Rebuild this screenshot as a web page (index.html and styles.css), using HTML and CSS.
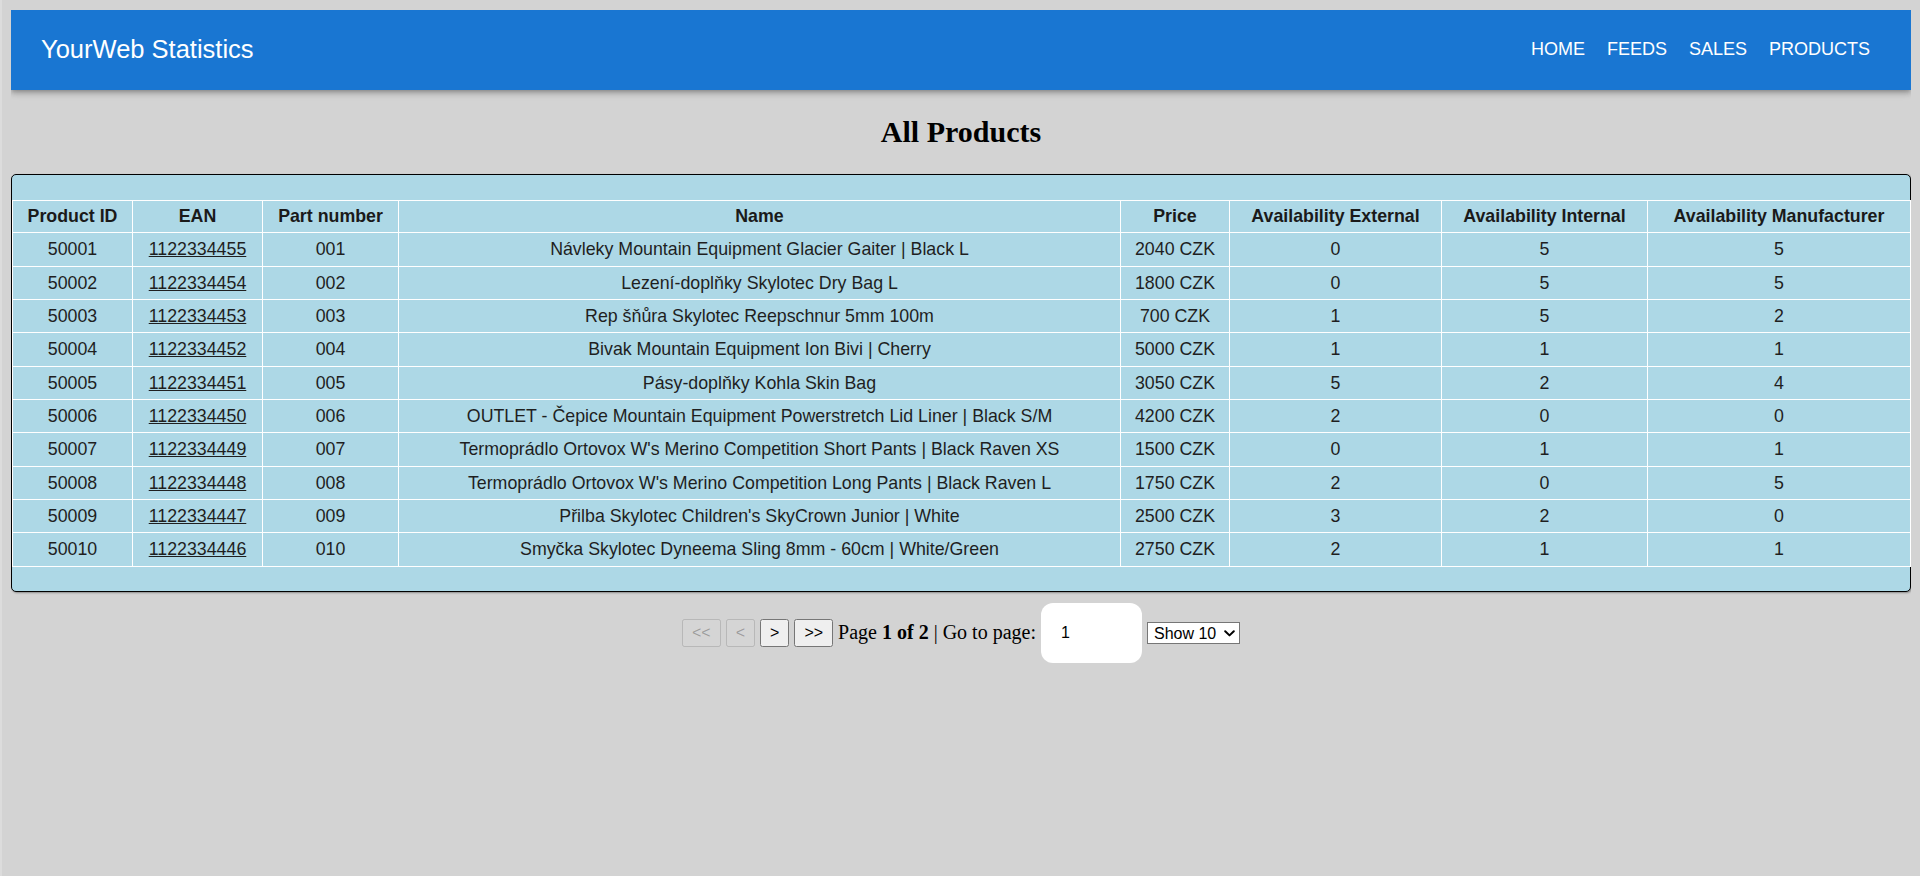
FILE: index.html
```html
<!DOCTYPE html>
<html lang="en">
<head>
<meta charset="utf-8">
<title>YourWeb Statistics</title>
<link rel="stylesheet" href="styles.css">
</head>
<body>
<header class="appbar">
  <div class="brand">YourWeb Statistics</div>
  <nav class="nav">
    <a class="nav-link" href="#">Home</a>
    <a class="nav-link" href="#">Feeds</a>
    <a class="nav-link" href="#">Sales</a>
    <a class="nav-link" href="#">Products</a>
  </nav>
</header>

<main>
  <h2 class="page-title">All Products</h2>

  <div class="table-card">
    <table class="products">
      <colgroup>
        <col class="c-id"><col class="c-ean"><col class="c-part"><col class="c-name">
        <col class="c-price"><col class="c-ext"><col class="c-int"><col class="c-man">
      </colgroup>
      <thead>
        <tr>
          <th>Product ID</th><th>EAN</th><th>Part number</th><th>Name</th>
          <th>Price</th><th>Availability External</th><th>Availability Internal</th><th>Availability Manufacturer</th>
        </tr>
      </thead>
      <tbody>
        <tr><td>50001</td><td><a href="#">1122334455</a></td><td>001</td><td>Návleky Mountain Equipment Glacier Gaiter | Black L</td><td>2040 CZK</td><td>0</td><td>5</td><td>5</td></tr>
        <tr><td>50002</td><td><a href="#">1122334454</a></td><td>002</td><td>Lezení-doplňky Skylotec Dry Bag L</td><td>1800 CZK</td><td>0</td><td>5</td><td>5</td></tr>
        <tr><td>50003</td><td><a href="#">1122334453</a></td><td>003</td><td>Rep šňůra Skylotec Reepschnur 5mm 100m</td><td>700 CZK</td><td>1</td><td>5</td><td>2</td></tr>
        <tr><td>50004</td><td><a href="#">1122334452</a></td><td>004</td><td>Bivak Mountain Equipment Ion Bivi | Cherry</td><td>5000 CZK</td><td>1</td><td>1</td><td>1</td></tr>
        <tr><td>50005</td><td><a href="#">1122334451</a></td><td>005</td><td>Pásy-doplňky Kohla Skin Bag</td><td>3050 CZK</td><td>5</td><td>2</td><td>4</td></tr>
        <tr><td>50006</td><td><a href="#">1122334450</a></td><td>006</td><td>OUTLET - Čepice Mountain Equipment Powerstretch Lid Liner | Black S/M</td><td>4200 CZK</td><td>2</td><td>0</td><td>0</td></tr>
        <tr><td>50007</td><td><a href="#">1122334449</a></td><td>007</td><td>Termoprádlo Ortovox W's Merino Competition Short Pants | Black Raven XS</td><td>1500 CZK</td><td>0</td><td>1</td><td>1</td></tr>
        <tr><td>50008</td><td><a href="#">1122334448</a></td><td>008</td><td>Termoprádlo Ortovox W's Merino Competition Long Pants | Black Raven L</td><td>1750 CZK</td><td>2</td><td>0</td><td>5</td></tr>
        <tr><td>50009</td><td><a href="#">1122334447</a></td><td>009</td><td>Přilba Skylotec Children's SkyCrown Junior | White</td><td>2500 CZK</td><td>3</td><td>2</td><td>0</td></tr>
        <tr><td>50010</td><td><a href="#">1122334446</a></td><td>010</td><td>Smyčka Skylotec Dyneema Sling 8mm - 60cm | White/Green</td><td>2750 CZK</td><td>2</td><td>1</td><td>1</td></tr>
      </tbody>
    </table>
  </div>

  <div class="pager">
    <button class="pg-btn" disabled>&lt;&lt;</button>
    <button class="pg-btn" disabled>&lt;</button>
    <button class="pg-btn">&gt;</button>
    <button class="pg-btn">&gt;&gt;</button>
    <span class="pg-text">Page <strong>1 of 2</strong> | Go to page:</span>
    <input class="pg-input" type="number" value="1">
    <span class="select-wrap">
      <select class="pg-select">
        <option>Show 10</option>
        <option>Show 20</option>
        <option>Show 30</option>
      </select>
      <svg class="select-chevron" width="11" height="7" viewBox="0 0 11 7" aria-hidden="true">
        <path d="M1.2 1.2 L5.5 5.4 L9.8 1.2" fill="none" stroke="#000" stroke-width="2" stroke-linecap="round" stroke-linejoin="round"/>
      </svg>
    </span>
  </div>
</main>
</body>
</html>
```

FILE: styles.css
```css
html {
  background: #d3d3d3;
  border-left: 2px solid #dcdcdc;
  min-height: 100%;
}

body {
  margin: 10px 9px 0 9px;
  font-family: "Liberation Serif", "Times New Roman", serif;
  color: #000;
}

.appbar {
  height: 79.5px;
  box-sizing: border-box;
  padding: 0 30px;
  background: #1976d2;
  color: #fff;
  display: flex;
  align-items: center;
  justify-content: space-between;
  font-family: "Liberation Sans", Arial, sans-serif;
  box-shadow: 0 2px 4px -1px rgba(0,0,0,0.2), 0 4px 5px 0 rgba(0,0,0,0.14), 0 1px 10px 0 rgba(0,0,0,0.12);
}

.brand {
  font-size: 25.5px;
}

.nav {
  display: flex;
}

.nav-link {
  color: #fff;
  text-decoration: none;
  text-transform: uppercase;
  font-size: 18px;
  padding: 0 11px;
}

.page-title {
  margin: 25px 0;
  text-align: center;
  font-size: 30px;
  font-weight: bold;
}

.table-card {
  background: #add8e6;
  border: 1px solid #000;
  border-radius: 5px;
  padding: 25.5px 0 24.5px;
  box-shadow: 1px 1px 2px rgba(0,0,0,0.35);
}

.products {
  width: 100%;
  table-layout: fixed;
  border-collapse: collapse;
  font-family: "Liberation Sans", Arial, sans-serif;
  font-size: 17.8px;
  color: #1f1f1f;
}

.c-id { width: 120px; }
.c-ean { width: 130px; }
.c-part { width: 136px; }
.c-name { width: 722px; }
.c-price { width: 109px; }
.c-ext { width: 212px; }
.c-int { width: 206px; }
.c-man { width: 263px; }

.products th,
.products td {
  border: 1px solid #fff;
  text-align: center;
  padding: 6px 4px;
  white-space: nowrap;
}

.products th {
  font-weight: bold;
  line-height: 19.3px;
  color: #1a1a1a;
}

.products td {
  line-height: 20.33px;
}

.products td a {
  color: #1f1f1f;
  text-decoration: underline;
}

.pager {
  margin-top: 11px;
  display: flex;
  align-items: center;
  justify-content: center;
  gap: 5px;
}

.pg-btn {
  font-family: "Liberation Sans", Arial, sans-serif;
  font-size: 16px;
  padding: 3px 8px;
}

.pg-text {
  font-size: 20px;
  position: relative;
  top: -1px;
}

.pg-input {
  width: 101px;
  height: 60px;
  box-sizing: border-box;
  border: none;
  border-radius: 12px;
  background: #fff;
  padding: 0 0 0 20px;
  font-family: "Liberation Sans", Arial, sans-serif;
  font-size: 16px;
  color: #000;
  -moz-appearance: textfield;
}

.pg-input::-webkit-outer-spin-button,
.pg-input::-webkit-inner-spin-button {
  -webkit-appearance: none;
  margin: 0;
}

.select-wrap {
  position: relative;
  display: inline-flex;
}

.pg-select {
  -webkit-appearance: none;
  appearance: none;
  font-family: "Liberation Sans", Arial, sans-serif;
  font-size: 16px;
  width: 93px;
  height: 22.4px;
  box-sizing: border-box;
  padding: 0 0 0 6px;
  border: 1px solid #767676;
  border-radius: 0;
  background: #fff;
  color: #000;
}

.select-chevron {
  position: absolute;
  right: 5px;
  top: 8px;
  pointer-events: none;
}
```
